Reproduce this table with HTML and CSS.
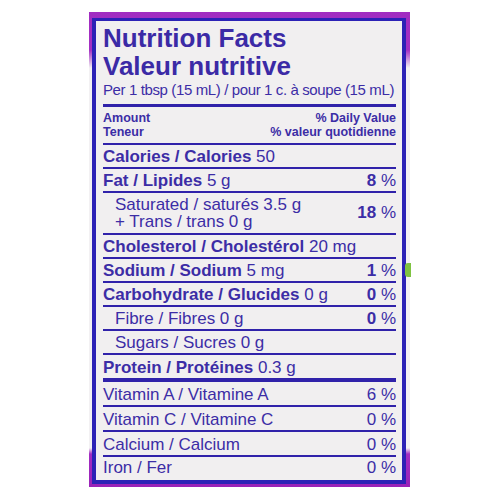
FILE: index.html
```html
<!DOCTYPE html>
<html lang="en">
<head>
<meta charset="utf-8">
<title>Nutrition Facts</title>
<link rel="stylesheet" href="styles.css">
</head>
<body>
<div class="pack">
  <div class="label">
    <h1 class="title">Nutrition Facts<br>Valeur nutritive</h1>
    <p class="serving">Per 1 tbsp (15 mL) / pour 1 c. à soupe (15 mL)</p>
    <div class="head">
      <div class="head-row"><span>Amount</span><span>% Daily Value</span></div>
      <div class="head-row"><span>Teneur</span><span>% valeur quotidienne</span></div>
    </div>
    <div class="row"><span><b>Calories / Calories</b> 50</span></div>
    <div class="row"><span><b>Fat / Lipides</b> 5 g</span><span class="dv"><b>8</b> %</span></div>
    <div class="row double sub"><span class="lines"><span>Saturated / saturés 3.5 g</span><span>+ Trans / trans 0 g</span></span><span class="dv"><b>18</b> %</span></div>
    <div class="row"><span><b>Cholesterol / Cholestérol</b> 20 mg</span></div>
    <div class="row"><span><b>Sodium / Sodium</b> 5 mg</span><span class="dv"><b>1</b> %</span></div>
    <div class="row"><span><b>Carbohydrate / Glucides</b> 0 g</span><span class="dv"><b>0</b> %</span></div>
    <div class="row sub"><span>Fibre / Fibres 0 g</span><span class="dv"><b>0</b> %</span></div>
    <div class="row sub"><span>Sugars / Sucres 0 g</span></div>
    <div class="row protein"><span><b>Protein / Protéines</b> 0.3 g</span></div>
    <div class="row vit"><span>Vitamin A / Vitamine A</span><span class="dv">6 %</span></div>
    <div class="row vit"><span>Vitamin C / Vitamine C</span><span class="dv">0 %</span></div>
    <div class="row vit"><span>Calcium / Calcium</span><span class="dv">0 %</span></div>
    <div class="row last"><span>Iron / Fer</span><span class="dv">0 %</span></div>
  </div>
  <span class="smudge"></span>
</div>
</body>
</html>
```

FILE: styles.css
```css
* { box-sizing: border-box; }

body {
  margin: 0;
  background: #ffffff;
  font-family: "Liberation Sans", Arial, sans-serif;
  color: #3c2da6;
}

.pack {
  position: relative;
  width: 321px;
  margin: 12px 0 0 89px;
  padding: 6px 4px 3px 3px;
  background-color: #f3f1f3;
  background-image: linear-gradient(180deg,
    #a12cc1 0px, #a42fc3 38px, #f3f1f3 56px,
    #f3f1f3 436px, #a22cc2 442px, #9a22b8 100%);
}

.label {
  border: 4px solid #2c22b6;
  border-top-width: 3px;
  background: #f1eff0;
  padding: 0 6px 0 7px;
}

.title {
  margin: 3px 0 0;
  font-size: 26px;
  line-height: 28px;
  font-weight: 700;
  color: #3b2aa6;
}

.serving {
  margin: 1px 0 0;
  font-size: 15px;
  line-height: 18px;
  letter-spacing: -0.38px;
  padding-bottom: 5px;
  border-bottom: 3px solid #3022aa;
}

.head {
  padding: 4px 0;
  border-bottom: 2px solid #3022aa;
  font-size: 12.5px;
  line-height: 14px;
  font-weight: 700;
}

.head-row {
  display: flex;
  justify-content: space-between;
}

.row {
  display: flex;
  justify-content: space-between;
  align-items: center;
  font-size: 17px;
  line-height: 20px;
  padding-top: 2px;
  border-bottom: 2px solid #3022aa;
  white-space: nowrap;
}

.row b { font-weight: 700; }

.sub { padding-left: 12px; }

.double {
  padding-top: 3px;
  padding-bottom: 3px;
}

.lines {
  display: flex;
  flex-direction: column;
  line-height: 17px;
}

.protein {
  line-height: 21px;
  border-bottom-width: 4px;
}

.vit { padding-top: 3px; }

.last {
  padding-top: 1px;
  padding-bottom: 2px;
  border-bottom: none;
}

.dv { text-align: right; }

.smudge {
  position: absolute;
  right: -1px;
  top: 251px;
  width: 6px;
  height: 14px;
  border-radius: 3px 0 0 3px;
  background: #7fc341;
}
```
